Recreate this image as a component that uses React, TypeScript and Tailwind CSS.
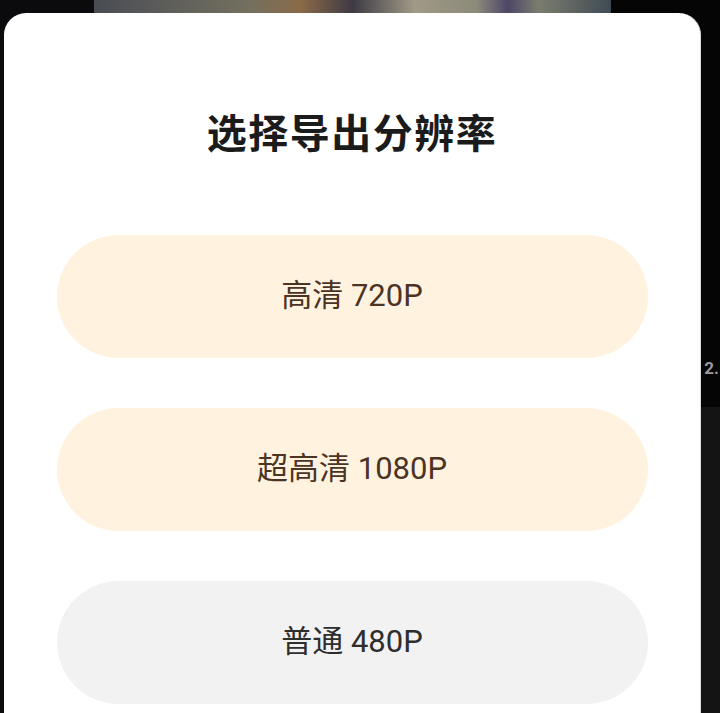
const options = [
  { label: "高清 720P", tone: "warm" },
  { label: "超高清 1080P", tone: "warm" },
  { label: "普通 480P", tone: "plain" },
];

export default function App() {
  return (
    <div
      className="relative w-[720px] h-[713px] overflow-hidden bg-[#070707]"
      style={{ fontFamily: 'Roboto, "Noto Sans CJK SC", sans-serif' }}
    >
      {/* page underneath the sheet */}
      <div className="flex h-full">
        <div className="w-[94px] shrink-0 bg-[#0b0b0d]" />
        <div className="w-[517px] shrink-0">
          <div className="h-[14px] bg-[linear-gradient(90deg,#4a4c55_0%,#5d5e5a_14%,#74705f_30%,#8a6a48_40%,#3e3a44_50%,#a09a86_62%,#8c8a7a_74%,#4e4668_80%,#7b7e6e_86%,#3f4a54_100%)]" />
        </div>
        <div className="flex-1 flex flex-col">
          <div className="h-[407px] bg-[#050505] flex items-end pb-[30px] justify-end pr-[1px]">
            <span className="text-[17px] font-bold text-[#9a9a9a] leading-none">2.</span>
          </div>
          <div className="flex-1 bg-[#141414]" />
        </div>
      </div>

      {/* export resolution sheet */}
      <div className="absolute left-[4px] top-[13px] w-[697px] bottom-0 bg-white rounded-t-[22px] border-r border-[#d9d9d9] flex flex-col items-center">
        <h2 className="mt-[102px] h-[40px] leading-[40px] text-[40px] font-bold text-[#1b1b1b] tracking-[1.5px]">
          选择导出分辨率
        </h2>
        <div className="mt-[80px] flex flex-col gap-[50px]">
          {options.map((o) => (
            <button
              key={o.label}
              className={
                o.tone === "warm"
                  ? "w-[591px] h-[123px] rounded-full bg-[#fff3e0] text-[#4c3425] text-[31px]"
                  : "w-[591px] h-[123px] rounded-full bg-[#f2f2f2] text-[#2e2e2e] text-[31px]"
              }
            >
              {o.label}
            </button>
          ))}
        </div>
      </div>
    </div>
  );
}
